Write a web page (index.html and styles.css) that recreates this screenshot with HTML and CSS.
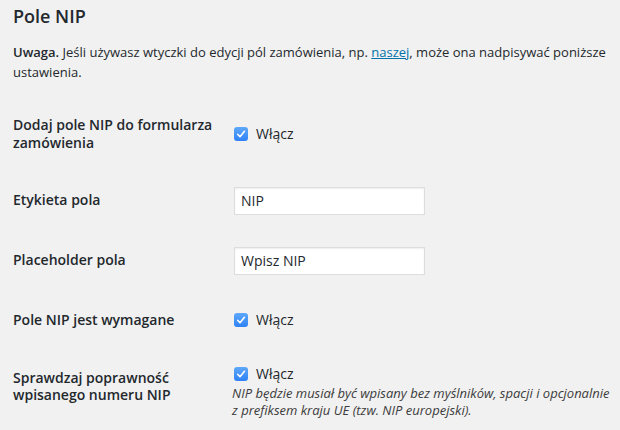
FILE: index.html
```html
<!DOCTYPE html>
<html lang="pl">
<head>
<meta charset="utf-8">
<link rel="stylesheet" href="styles.css">
</head>
<body>
<div class="wrap">
  <h2 class="title">Pole NIP</h2>
  <p class="note"><strong>Uwaga.</strong> Jeśli używasz wtyczki do edycji pól zamówienia, np. <a href="#">naszej</a>, może ona nadpisywać poniższe ustawienia.</p>
  <div class="form">
    <div class="row">
      <div class="th">Dodaj pole NIP do formularza zamówienia</div>
      <div class="td"><label class="check"><span class="box"><svg viewBox="0 0 14 14" width="14" height="14"><path d="M3.7 7.3 L6 9.7 L10.4 4.3" fill="none" stroke="#fff" stroke-width="1.6" stroke-linecap="round" stroke-linejoin="round"/></svg></span>Włącz</label></div>
    </div>
    <div class="row">
      <div class="th">Etykieta pola</div>
      <div class="td"><div class="input">NIP</div></div>
    </div>
    <div class="row">
      <div class="th">Placeholder pola</div>
      <div class="td"><div class="input">Wpisz NIP</div></div>
    </div>
    <div class="row">
      <div class="th">Pole NIP jest wymagane</div>
      <div class="td"><label class="check"><span class="box"><svg viewBox="0 0 14 14" width="14" height="14"><path d="M3.7 7.3 L6 9.7 L10.4 4.3" fill="none" stroke="#fff" stroke-width="1.6" stroke-linecap="round" stroke-linejoin="round"/></svg></span>Włącz</label></div>
    </div>
    <div class="row">
      <div class="th">Sprawdzaj poprawność wpisanego numeru NIP</div>
      <div class="td"><label class="check"><span class="box"><svg viewBox="0 0 14 14" width="14" height="14"><path d="M3.7 7.3 L6 9.7 L10.4 4.3" fill="none" stroke="#fff" stroke-width="1.6" stroke-linecap="round" stroke-linejoin="round"/></svg></span>Włącz</label>
      <p class="desc">NIP będzie musiał być wpisany bez myślników, spacji i opcjonalnie z prefiksem kraju UE (tzw. NIP europejski).</p></div>
    </div>
  </div>
</div>
</body>
</html>
```

FILE: styles.css
```css
html, body {
  margin: 0;
  padding: 0;
  background: #f1f1f1;
}
body {
  font-family: "Open Sans", "Noto Sans", sans-serif;
  color: #23282d;
  font-size: 13px;
}
.wrap {
  padding: 0 0 0 13px;
}
.title {
  margin: 0;
  padding-top: 4px;
  font-size: 18px;
  font-weight: 600;
  line-height: 24px;
}
.note {
  margin: 14px 0 0;
  font-size: 13px;
  line-height: 20px;
}
.note strong {
  font-weight: 600;
}
.note a {
  color: #0073aa;
}
.form {
  margin-top: 14px;
}
.row {
  display: flex;
  align-items: center;
}
.th {
  align-self: flex-start;
  flex: 0 0 210px;
  box-sizing: border-box;
  padding: 20px 10px 20px 0;
  font-size: 14px;
  font-weight: 600;
  line-height: 17.5px;
}
.td {
  flex: 1 1 auto;
  min-width: 0;
  padding: 15px 0 15px 10px;
  font-size: 14px;
}
.check {
  display: flex;
  align-items: center;
  line-height: 20px;
  padding-left: 1px;
}
.box {
  width: 14px;
  height: 14px;
  border-radius: 3px;
  background: linear-gradient(#5ea8fb, #2f82f5);
  margin: 0 8px 0 0;
  display: block;
}
.box svg {
  display: block;
}
.input {
  width: 183px;
  height: 26px;
  border: 1px solid #ddd;
  background: #fff;
  box-shadow: inset 0 1px 2px rgba(0,0,0,0.07);
  padding: 0 0 0 6px;
  line-height: 26px;
  font-size: 14px;
  margin: 1px 0 1px 1px;
}
.desc {
  margin: 1px 0 0 -1px;
  font-style: italic;
  font-size: 13px;
  line-height: 17px;
  color: #3c3c3c;
  max-width: 384px;
}
```
